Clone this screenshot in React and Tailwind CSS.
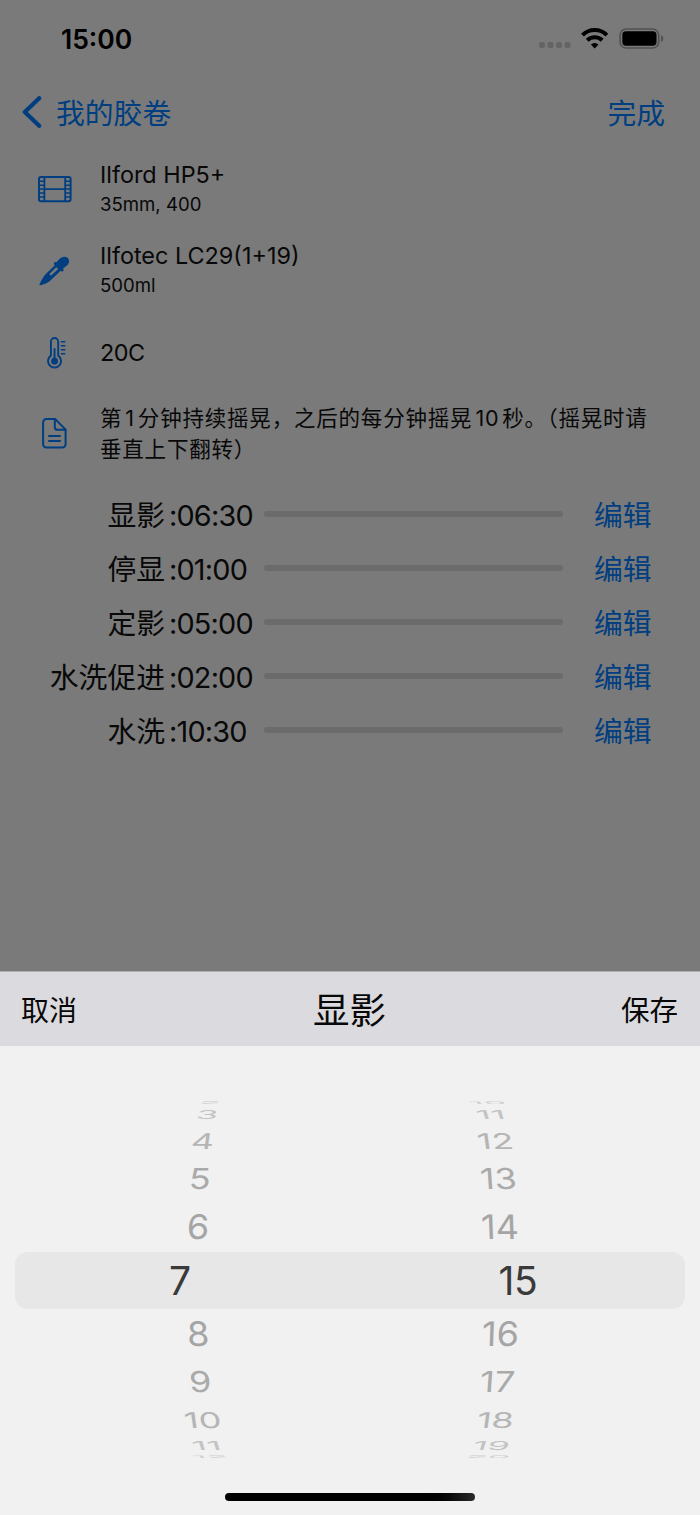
const FilmIcon = () => (
    <svg width="34" height="27" viewBox="0 0 34 27" fill="none" stroke="currentColor">
        <rect x="1" y="1" width="31.6" height="24.2" rx="2" strokeWidth="2" />
        <path d="M6.4 1v24.2M27.2 1v24.2" strokeWidth="1.8" />
        <path d="M6.4 13.1h20.8" strokeWidth="1.7" />
        <path d="M1 5.2h5.4M1 9.2h5.4M1 13.1h5.4M1 17.1h5.4M1 21.1h5.4M27.2 5.2h5.4M27.2 9.2h5.4M27.2 13.1h5.4M27.2 17.1h5.4M27.2 21.1h5.4" strokeWidth="1.5" />
    </svg>
);

const DropperIcon = () => (
    <svg width="31" height="30" viewBox="0 0 31 30" fill="none">
        <path
            fill="currentColor"
            fillRule="evenodd"
            d="M20.2 3.2C22.4.9 25.8-.2 28.2 1.6C31 3.8 30.4 7.4 27.9 9.6L24.1 12.5C25.1 14 24.3 15.8 22.9 15.6L21.7 14.8L10.9 25.1C8 27.5 4.6 28.7 1.5 29.2C.4 29.4.2 28.8.7 27.9C2.2 24.6 4.2 21.2 6.3 18.6L15.6 9.5L15.1 8.3C14.4 6.7 16.1 5.4 17.5 6.3ZM17.2 11.2L10.9 17.5C10.1 18.6 11.6 20 12.7 19.1L19.2 12.9Z"
        />
    </svg>
);

const ThermometerIcon = () => (
    <svg width="20" height="32" viewBox="0 0 20 32" fill="none" stroke="currentColor" strokeLinecap="round">
        <path d="M3.9 18.6V4.7a3.65 3.65 0 0 1 7.3 0v13.9a6.5 6.5 0 1 1-7.3 0Z" strokeWidth="1.9" />
        <path d="M7.55 12v11" strokeWidth="1.9" />
        <circle cx="7.55" cy="24.2" r="3.4" fill="currentColor" stroke="none" />
        <path d="M14.4 4.7h3.4M14.4 8.7h3.4M14.4 12.7h3.4M14.4 16.7h3.4" strokeWidth="1.5" />
    </svg>
);

const DocumentIcon = () => (
    <svg width="25" height="31" viewBox="0 0 25 31" fill="none" stroke="currentColor" strokeWidth="2" strokeLinecap="round" strokeLinejoin="round">
        <path d="M4.4 1.1h8.9L23.6 11.6v14.6a3.3 3.3 0 0 1-3.3 3.3H4.4a3.3 3.3 0 0 1-3.3-3.3V4.4a3.3 3.3 0 0 1 3.3-3.3Z" />
        <path d="M12.8 1.4v7.5a2.9 2.9 0 0 0 2.9 2.9h7.6" />
        <path d="M7 18h11M7 23h11" />
    </svg>
);

const StatusIcons = () => (
    <svg width="126" height="24" viewBox="0 0 126 24" fill="none">
        <g fill="#646464">
            <rect x="0" y="15" width="6" height="6" rx="2" />
            <rect x="8.5" y="15" width="6" height="6" rx="2" />
            <rect x="17" y="15" width="6" height="6" rx="2" />
            <rect x="25.5" y="15" width="6" height="6" rx="2" />
        </g>
        <g stroke="#000" strokeWidth="4">
            <path d="M43.5 8.1a17.3 17.3 0 0 1 24.4 0" />
            <path d="M48.2 13.2a10.7 10.7 0 0 1 15 0" />
        </g>
        <path d="M55.7 21.5l-3.8-4a5.3 5.3 0 0 1 7.6 0Z" fill="#000" />
        <rect x="81.1" y="2" width="38.6" height="19" rx="6" stroke="#515151" strokeWidth="1.6" />
        <rect x="83.3" y="4.3" width="34.2" height="14.4" rx="3.6" fill="#000" />
        <path d="M122 8.2v6.8q2.4-.9 2.4-3.4t-2.4-3.4Z" fill="#515151" />
    </svg>
);

const INFO = [
    { icon: FilmIcon, title: 'Ilford HP5+', sub: '35mm, 400' },
    { icon: DropperIcon, title: 'Ilfotec LC29(1+19)', sub: '500ml' },
];

const STEPS = [
    { name: '显影', time: '06:30' },
    { name: '停显', time: '01:00' },
    { name: '定影', time: '05:00' },
    { name: '水洗促进', time: '02:00' },
    { name: '水洗', time: '10:30' },
];

// One entry per wheel row: row height, vertical squash, lean, sideways shift, opacity.
const WHEEL = [
    { h: 4, sy: 0.1, skew: 40, dx: 30, o: 0.3 },
    { h: 20, sy: 0.34, skew: 17, dx: 27, o: 0.42 },
    { h: 31, sy: 0.6, skew: 8, dx: 23, o: 0.55 },
    { h: 46, sy: 0.8, skew: 4, dx: 20, o: 0.65 },
    { h: 50, sy: 0.94, skew: 2, dx: 18, o: 0.7 },
    { h: 56, sy: 1, skew: 0, dx: 0, o: 1 },
    { h: 51, sy: 0.94, skew: -2, dx: 18, o: 0.7 },
    { h: 45, sy: 0.8, skew: -4, dx: 20, o: 0.65 },
    { h: 32, sy: 0.6, skew: -8, dx: 23, o: 0.55 },
    { h: 19, sy: 0.34, skew: -17, dx: 27, o: 0.42 },
    { h: 4, sy: 0.1, skew: -40, dx: 30, o: 0.3 },
];

function Wheel({ from, side }) {
    return (
        <div className="w-[80px] flex flex-col">
            {WHEEL.map((row, i) => (
                <div key={i} className="flex items-center justify-center" style={{ height: row.h }}>
                    <span
                        className={i === 5 ? 'text-[39px] leading-none text-[#3a3a3a] tracking-[-0.2px]' : 'text-[36px] leading-none text-[#858585]'}
                        style={{
                            opacity: row.o,
                            transform: `translateX(${row.dx * side}px) skewX(${-row.skew * side}deg) scaleY(${row.sy})`,
                        }}
                    >
                        {from + i}
                    </span>
                </div>
            ))}
        </div>
    );
}

export default function App() {
    return (
        <div className="w-[700px] h-[1515px] flex flex-col overflow-hidden bg-[#7a7a7a] text-[#080808] font-['Inter','Noto_Sans_CJK_SC',sans-serif]">
            <div className="h-[76px] pt-[2px] shrink-0 flex items-center justify-between pl-[61px] pr-[35px]">
                <span className="text-[26.5px] font-semibold leading-none text-black">15:00</span>
                <StatusIcons />
            </div>

            <div className="h-[72px] shrink-0 flex items-center justify-between pl-[22px] pr-[35px] text-[#003e80] text-[28.8px] leading-none">
                <div className="flex items-center gap-[14px]">
                    <svg width="20" height="32" viewBox="0 0 20 32" fill="none" stroke="currentColor" strokeWidth="4.2" strokeLinecap="round" strokeLinejoin="round">
                        <path d="M17.2 2.2L2.8 16l14.4 13.8" />
                    </svg>
                    <span className="pt-[4px]">我的胶卷</span>
                </div>
                <span className="pt-[4px]">完成</span>
            </div>

            <div className="pt-px">
                {INFO.map(({ icon: Icon, title, sub }) => (
                    <div key={title} className="h-[81px] flex items-center">
                        <div className="w-[100px] pl-[9px] flex justify-center text-[#003e80]"><Icon /></div>
                        <div>
                            <p className="text-[23.4px] leading-[30px]">{title}</p>
                            <p className="text-[18.6px] leading-[29px]">{sub}</p>
                        </div>
                    </div>
                ))}
            </div>

            <div className="h-[81px] pt-[2px] shrink-0 flex items-center">
                <div className="w-[100px] pl-[13px] flex justify-center text-[#003e80]"><ThermometerIcon /></div>
                <p className="text-[23.4px] leading-[30px] tracking-[-0.5px]">20C</p>
            </div>

            <div className="h-[82px] shrink-0 flex items-center">
                <div className="w-[100px] pl-[8px] flex justify-center text-[#003e80]"><DocumentIcon /></div>
                <p className="pt-px text-[21.5px] leading-[30.5px] tracking-[0.8px] whitespace-nowrap">
                    第<span className="mx-[3px]">1</span>分钟持续摇晃，之后的每分钟摇晃<span className="mx-[3px]">10</span>秒。（摇晃时请
                    <br />
                    垂直上下翻转）
                </p>
            </div>

            <div className="pt-[13px] flex flex-col text-[28.8px] leading-none">
                {STEPS.map((step) => (
                    <div key={step.name} className="h-[54px] flex items-center">
                        <span className="w-[165px] pt-[4px] text-right">{step.name}</span>
                        <span className="w-[99px] pl-[4px] pt-[4px] tracking-[-0.8px] whitespace-nowrap">:{step.time}</span>
                        <div className="w-[299px] h-[6px] rounded-full bg-[#6b6b6b]" />
                        <span className="ml-[31px] pt-[4px] text-[#003e80]">编辑</span>
                    </div>
                ))}
            </div>

            <div className="mt-auto h-[544px] shrink-0 flex flex-col bg-[#f1f1f1]">
                <div className="h-[75px] pt-[4px] shrink-0 grid grid-cols-3 items-center pl-[21px] pr-[22px] bg-[#dbdade] border-t border-[#b0b0b2] leading-none">
                    <span className="text-[28px]">取消</span>
                    <span className="text-[36.5px] text-center">显影</span>
                    <span className="text-[28.5px] text-right">保存</span>
                </div>

                <div className="pt-[55px] grid grid-cols-1">
                    <div className="col-start-1 row-start-1 mx-[15px] mt-[151px] h-[57px] rounded-[13px] bg-[#e7e7e7]" />
                    <div className="col-start-1 row-start-1 z-10 flex justify-between pl-[140px] pr-[142px]">
                        <Wheel from={2} side={1} />
                        <Wheel from={10} side={-1} />
                    </div>
                </div>

                <div className="mt-auto mb-[14px] mx-auto w-[250px] h-[8px] rounded-full bg-linear-to-r from-black from-80% to-[#2b2b2b]" />
            </div>
        </div>
    );
}
